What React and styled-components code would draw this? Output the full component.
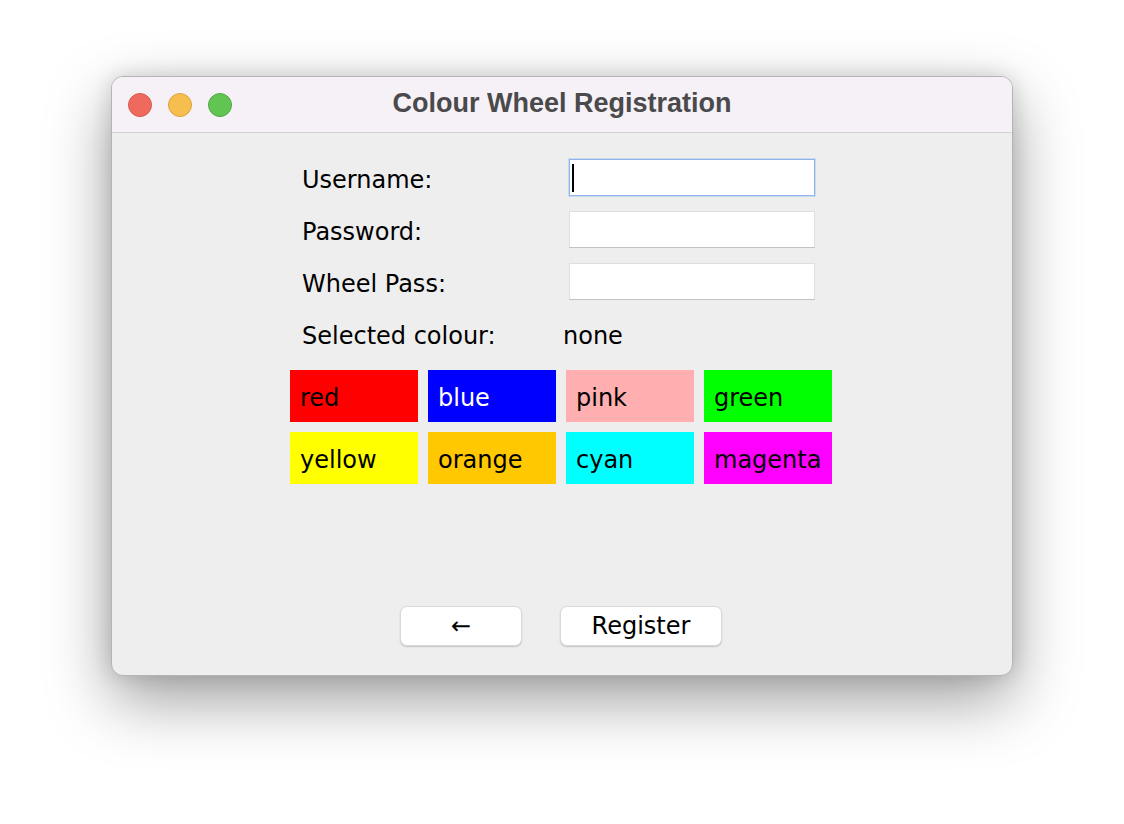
import React from 'react';
import styled, { createGlobalStyle } from 'styled-components';

const colours = [
  { name: 'red', bg: '#ff0000', fg: '#000000' },
  { name: 'blue', bg: '#0000ff', fg: '#ffffff' },
  { name: 'pink', bg: '#ffafaf', fg: '#000000' },
  { name: 'green', bg: '#00ff00', fg: '#000000' },
  { name: 'yellow', bg: '#ffff00', fg: '#000000' },
  { name: 'orange', bg: '#ffc800', fg: '#000000' },
  { name: 'cyan', bg: '#00ffff', fg: '#000000' },
  { name: 'magenta', bg: '#ff00ff', fg: '#000000' },
];

function App() {
  return (
    <>
      <GlobalStyle />
      <Desktop>
        <Window>
          <TitleBar>
            <Lights>
              <Light $bg="#ee6a5f" $edge="#d65a4f" />
              <Light $bg="#f6be4f" $edge="#dba43e" />
              <Light $bg="#61c554" $edge="#50a945" />
            </Lights>
            <Title>Colour Wheel Registration</Title>
          </TitleBar>
          <Body>
            <Form>
              <Label>Username:</Label>
              <Field $focused>
                <Caret />
              </Field>
              <Label>Password:</Label>
              <Field />
              <Label>Wheel Pass:</Label>
              <Field />
              <Label>Selected colour:</Label>
              <Value>none</Value>
            </Form>
            <Swatches>
              {colours.map((c) => (
                <Swatch key={c.name} $bg={c.bg} $fg={c.fg}>
                  {c.name}
                </Swatch>
              ))}
            </Swatches>
            <Buttons>
              <Button $width={122}>←</Button>
              <Button $width={162}>Register</Button>
            </Buttons>
          </Body>
        </Window>
      </Desktop>
    </>
  );
}

const GlobalStyle = createGlobalStyle`
  html, body {
    margin: 0;
    padding: 0;
    background: #ffffff;
  }
  body {
    width: 1124px;
    height: 824px;
    overflow: hidden;
  }
`;

const Desktop = styled.div`
  width: 1124px;
  height: 824px;
  padding: 76px 0 0 111px;
  box-sizing: border-box;
  background: #ffffff;
`;

const Window = styled.div`
  width: 902px;
  height: 600px;
  box-sizing: border-box;
  border-radius: 12px;
  border: 1px solid #b4b4b4;
  background: #eeeeee;
  overflow: hidden;
  display: flex;
  flex-direction: column;
  box-shadow: 0 24px 64px rgba(0, 0, 0, 0.38), 0 0 20px rgba(0, 0, 0, 0.14);
`;

const TitleBar = styled.div`
  height: 55px;
  flex: none;
  display: grid;
  grid-template-columns: 1fr auto 1fr;
  align-items: center;
  background: #f5f1f6;
  border-bottom: 1px solid #d3d1d4;
`;

const Lights = styled.div`
  display: flex;
  gap: 16px;
  padding-left: 16px;
`;

const Light = styled.span`
  width: 24px;
  height: 24px;
  box-sizing: border-box;
  border-radius: 50%;
  background: ${(p) => p.$bg};
  border: 1px solid ${(p) => p.$edge};
`;

const Title = styled.div`
  font-family: 'Liberation Sans', Arial, sans-serif;
  font-weight: bold;
  font-size: 27px;
  color: #4a494b;
  white-space: nowrap;
  padding-bottom: 2px;
`;

const Body = styled.div`
  flex: 1;
  display: flex;
  flex-direction: column;
  padding-top: 26px;
  font-family: 'DejaVu Sans', sans-serif;
  font-size: 24px;
  color: #000000;
`;

const Form = styled.div`
  margin-left: 190px;
  display: grid;
  grid-template-columns: 267px 246px;
  grid-auto-rows: 37px;
  row-gap: 15px;
`;

const Label = styled.div`
  line-height: 37px;
  padding-top: 3px;
  white-space: nowrap;
`;

const Value = styled(Label)`
  margin-left: -6px;
`;

const Field = styled.div`
  box-sizing: border-box;
  background: #ffffff;
  display: flex;
  align-items: center;
  padding-left: 2px;
  border: 1px solid ${(p) => (p.$focused ? '#8db4ec' : '#dedede')};
  border-bottom-color: ${(p) => (p.$focused ? '#8db4ec' : '#c2c2c2')};
  box-shadow: ${(p) => (p.$focused ? '0 0 0 1px rgba(141, 180, 236, 0.35)' : 'none')};
`;

const Caret = styled.span`
  width: 2px;
  height: 28px;
  background: #000000;
`;

const Swatches = styled.div`
  margin: 18px 0 0 178px;
  display: grid;
  grid-template-columns: repeat(4, 128px);
  grid-auto-rows: 52px;
  gap: 10px;
`;

const Swatch = styled.div`
  background: ${(p) => p.$bg};
  color: ${(p) => p.$fg};
  line-height: 52px;
  padding: 2px 0 0 10px;
  box-sizing: border-box;
  white-space: nowrap;
`;

const Buttons = styled.div`
  margin-top: auto;
  padding: 0 2px 29px 0;
  display: flex;
  justify-content: center;
  gap: 38px;
`;

const Button = styled.div`
  width: ${(p) => p.$width}px;
  height: 40px;
  box-sizing: border-box;
  background: #ffffff;
  border-radius: 7px;
  border: 1px solid #d9d9d9;
  box-shadow: 0 1px 1.5px rgba(0, 0, 0, 0.18);
  display: flex;
  align-items: center;
  justify-content: center;
  font-size: 24px;
  line-height: 38px;
`;

export default App;
